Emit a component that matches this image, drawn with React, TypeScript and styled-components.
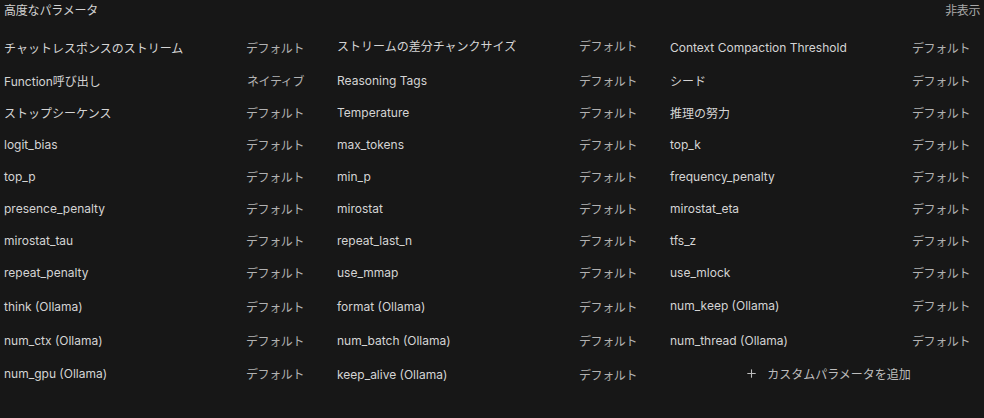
import { createGlobalStyle, styled } from 'styled-components';
import { Plus } from 'lucide-react';

const GlobalStyle = createGlobalStyle`
  html, body {
    margin: 0;
    padding: 0;
    background: #171717;
  }
  body {
    font-family: Inter, "Noto Sans CJK JP", sans-serif;
    -webkit-font-smoothing: antialiased;
  }
`;

const Panel = styled.div`
  width: 984px;
  height: 418px;
  box-sizing: border-box;
  padding: 0 4px;
  background: #171717;
  color: #d6d6d6;
`;

const Header = styled.div`
  height: 19px;
  display: flex;
  align-items: center;
  justify-content: space-between;
  font-size: 12px;
  margin-bottom: 12px;
`;

const HeaderTitle = styled.span`
  color: #d2d2d2;
  letter-spacing: -0.2px;
`;

const ToggleText = styled.button`
  background: none;
  border: none;
  padding: 0;
  font: inherit;
  color: #a8a8a8;
  letter-spacing: -0.4px;
  cursor: pointer;
`;

const Grid = styled.div`
  display: grid;
  grid-template-columns: repeat(3, 310px);
  grid-template-rows: 33px 32px 32px 32px 32px 32px 32px 33px 34px 34px 32px;
  column-gap: 23px;
`;

const Cell = styled.div<{ $shift?: number }>`
  display: flex;
  align-items: center;
  justify-content: space-between;
  padding-right: 10px;
  font-size: 12px;
  transform: translateY(${(p) => p.$shift ?? 0}px);
`;

const Label = styled.span`
  color: #d4d4d4;
  white-space: nowrap;
`;

const Value = styled.button`
  background: none;
  border: none;
  padding: 0;
  font: inherit;
  color: #b2b2b2;
  letter-spacing: -0.4px;
  cursor: pointer;
`;

const AddButton = styled.button`
  justify-self: center;
  align-self: center;
  display: flex;
  align-items: center;
  gap: 9px;
  background: none;
  border: none;
  padding: 0;
  margin-left: 6px;
  font: inherit;
  font-size: 12px;
  color: #bdbdbd;
  cursor: pointer;
`;

type Param = { label: string; value: string; shift?: number };

const params: Param[] = [
  { label: 'チャットレスポンスのストリーム', value: 'デフォルト' },
  { label: 'ストリームの差分チャンクサイズ', value: 'デフォルト', shift: -2 },
  { label: 'Context Compaction Threshold', value: 'デフォルト' },
  { label: 'Function呼び出し', value: 'ネイティブ' },
  { label: 'Reasoning Tags', value: 'デフォルト' },
  { label: 'シード', value: 'デフォルト' },
  { label: 'ストップシーケンス', value: 'デフォルト' },
  { label: 'Temperature', value: 'デフォルト' },
  { label: '推理の努力', value: 'デフォルト' },
  { label: 'logit_bias', value: 'デフォルト' },
  { label: 'max_tokens', value: 'デフォルト' },
  { label: 'top_k', value: 'デフォルト' },
  { label: 'top_p', value: 'デフォルト' },
  { label: 'min_p', value: 'デフォルト' },
  { label: 'frequency_penalty', value: 'デフォルト' },
  { label: 'presence_penalty', value: 'デフォルト' },
  { label: 'mirostat', value: 'デフォルト' },
  { label: 'mirostat_eta', value: 'デフォルト' },
  { label: 'mirostat_tau', value: 'デフォルト' },
  { label: 'repeat_last_n', value: 'デフォルト' },
  { label: 'tfs_z', value: 'デフォルト' },
  { label: 'repeat_penalty', value: 'デフォルト' },
  { label: 'use_mmap', value: 'デフォルト' },
  { label: 'use_mlock', value: 'デフォルト' },
  { label: 'think (Ollama)', value: 'デフォルト' },
  { label: 'format (Ollama)', value: 'デフォルト' },
  { label: 'num_keep (Ollama)', value: 'デフォルト', shift: -1 },
  { label: 'num_ctx (Ollama)', value: 'デフォルト' },
  { label: 'num_batch (Ollama)', value: 'デフォルト' },
  { label: 'num_thread (Ollama)', value: 'デフォルト' },
  { label: 'num_gpu (Ollama)', value: 'デフォルト' },
  { label: 'keep_alive (Ollama)', value: 'デフォルト', shift: 1 },
];

export default function App() {
  return (
    <>
      <GlobalStyle />
      <Panel>
        <Header>
          <HeaderTitle>高度なパラメータ</HeaderTitle>
          <ToggleText>非表示</ToggleText>
        </Header>
        <Grid>
          {params.map((p) => (
            <Cell key={p.label} $shift={p.shift}>
              <Label>{p.label}</Label>
              <Value>{p.value}</Value>
            </Cell>
          ))}
          <AddButton>
            <Plus size={13} strokeWidth={2} />
            カスタムパラメータを追加
          </AddButton>
        </Grid>
      </Panel>
    </>
  );
}
